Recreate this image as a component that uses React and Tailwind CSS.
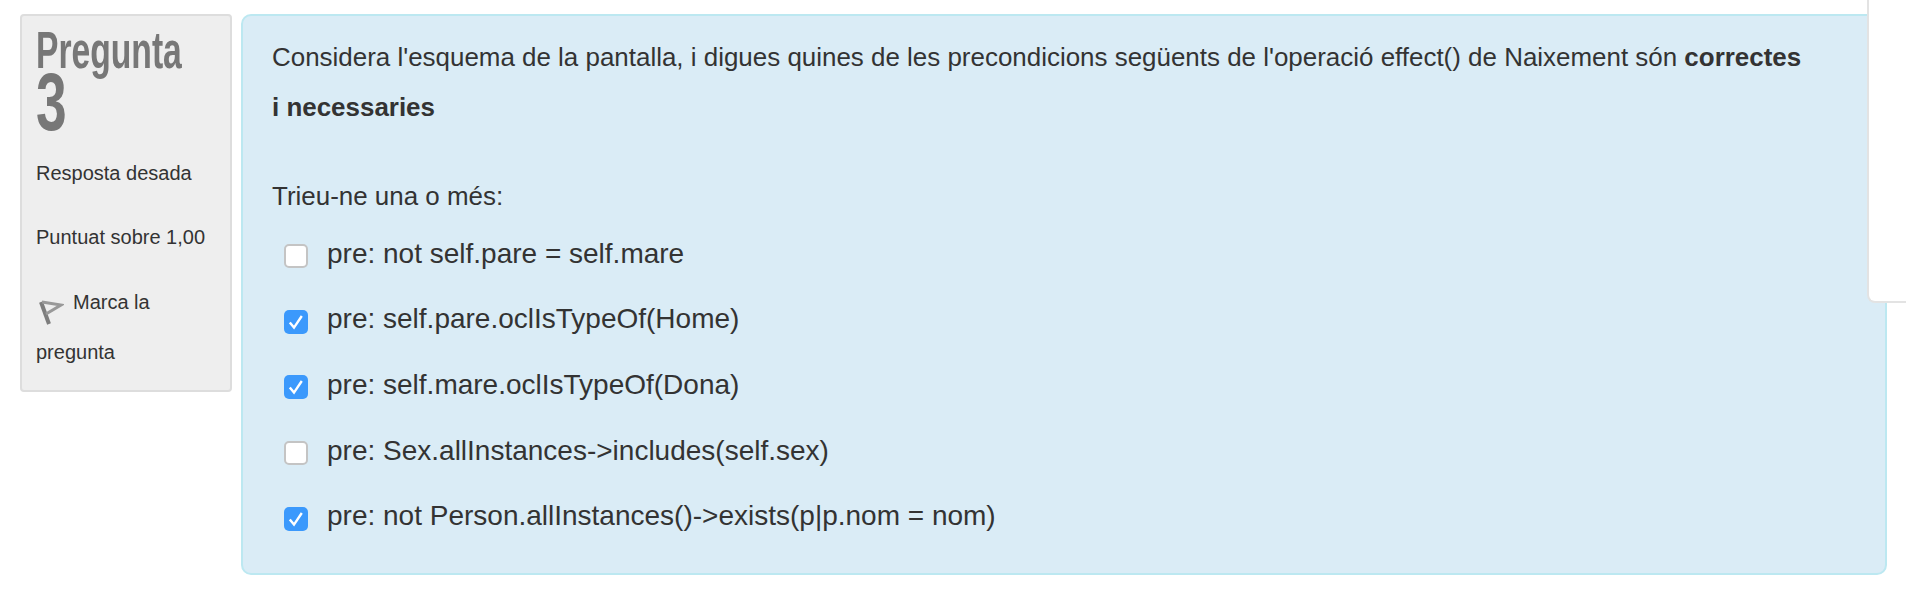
const FONT = "font-['Liberation_Sans',Arial,sans-serif]";

const OPTIONS = [
  { label: 'pre: not self.pare = self.mare', checked: false },
  { label: 'pre: self.pare.oclIsTypeOf(Home)', checked: true },
  { label: 'pre: self.mare.oclIsTypeOf(Dona)', checked: true },
  { label: 'pre: Sex.allInstances->includes(self.sex)', checked: false },
  { label: 'pre: not Person.allInstances()->exists(p|p.nom = nom)', checked: true },
];

function Checkbox({ checked }) {
  if (!checked) {
    return <span className="w-6 h-6 mt-[5px] shrink-0 rounded-[5px] bg-white border-2 border-[#c4c4c4]" />;
  }
  return (
    <span className="w-6 h-6 mt-[5px] shrink-0 rounded-[5px] bg-[#3b99fc] flex items-center justify-center">
      <svg width="16" height="16" viewBox="0 0 16 16" fill="none">
        <path d="M1.8 8.5 L6 13.6 L13.8 2" stroke="white" strokeWidth="2.4" />
      </svg>
    </span>
  );
}

function FlagIcon() {
  return (
    <svg width="26" height="28" viewBox="0 0 26 28" fill="none" className="inline-block blur-[0.7px] align-top mt-[22px] mr-[9px] ml-[2px]">
      <path d="M3 3 L11 25" stroke="#7d7d7d" strokeWidth="4" />
      <path d="M4 3 L23 6 L8 15" stroke="#999999" strokeWidth="3" />
    </svg>
  );
}

function InfoPanel() {
  return (
    <div className="w-[212px] h-[378px] shrink-0 bg-[#eeeeee] border-2 border-[#dddddd] rounded-[4px] px-[14px] text-[#333333] text-[20px]">
      <div className="font-bold text-[#777777] mt-[8px] h-[118px] origin-left scale-x-[0.647] whitespace-nowrap">
        <div className="text-[52px] leading-[52px]">Pregunta</div>
        <div className="text-[82px] leading-[52px] origin-left scale-x-[1.04]">3</div>
      </div>
      <p className="mt-[18px] leading-[26px]">Resposta desada</p>
      <p className="mt-[38px] leading-[26px]">Puntuat sobre 1,00</p>
      <p className="mt-[27px] leading-[50px]">
        <FlagIcon />
        Marca la pregunta
      </p>
    </div>
  );
}

function QuestionPanel() {
  return (
    <div className="w-[1646px] h-[561px] shrink-0 bg-[#daecf6] border-2 border-[#bce8f1] rounded-[10px] pl-[29px] pt-[16px] text-[#333333] text-[25.95px]">
      <p className="leading-[50px] w-[1540px]">
        Considera l'esquema de la pantalla, i digues quines de les precondicions següents de l'operació effect() de Naixement són <b>correctes i necessaries</b>
      </p>
      <p className="mt-[40px] leading-[48px]">Trieu-ne una o més:</p>
      <div className="mt-[1px] flex flex-col">
        {OPTIONS.map((o) => (
          <label key={o.label} className="flex items-center h-[65.6px] pl-[12px] gap-[19px] text-[28px]">
            <Checkbox checked={o.checked} />
            <span>{o.label}</span>
          </label>
        ))}
      </div>
    </div>
  );
}

export default function App() {
  return (
    <div className={`relative h-[610px] w-[1906px] overflow-hidden bg-white pt-[14px] pl-[20px] ${FONT}`}>
      <div className="flex gap-[9px] items-start">
        <InfoPanel />
        <QuestionPanel />
      </div>
      {/* white block hanging over the top right corner */}
      <div className="absolute top-0 left-[1867px] w-[60px] h-[303px] bg-white border-l-2 border-b-2 border-[#e3e3e3] rounded-bl-[8px]" />
    </div>
  );
}
